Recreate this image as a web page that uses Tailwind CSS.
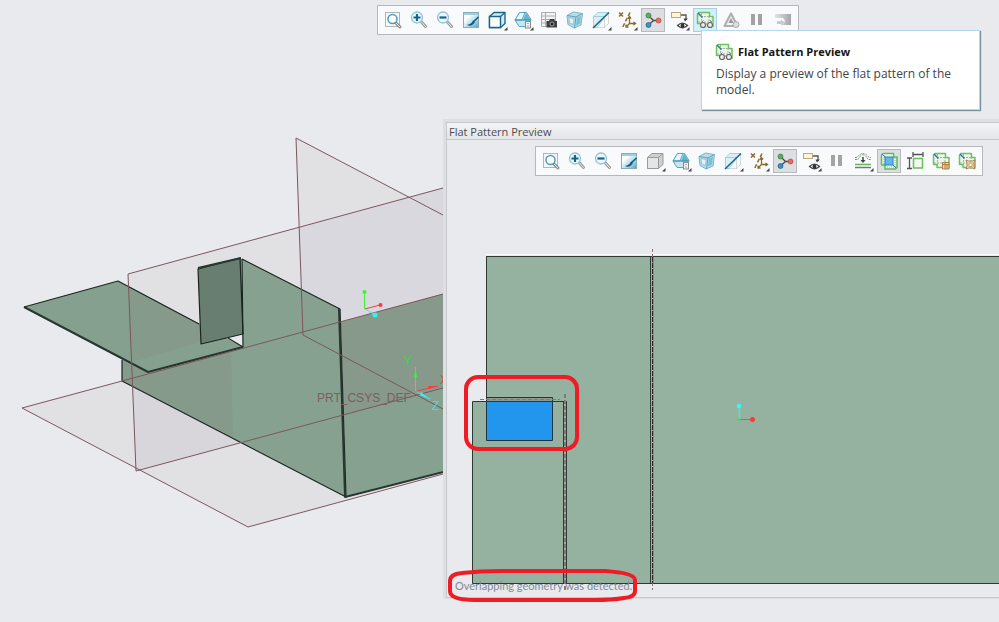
<!DOCTYPE html>
<html lang="en">
<head>
    <meta charset="UTF-8">
    <meta name="viewport" content="width=device-width, initial-scale=1.0">
    <title>Flat Pattern Preview</title>
    <script src="https://cdn.jsdelivr.net/npm/@tailwindcss/browser@4"></script>
</head>
<body class="bg-[#e8eaee] font-['Open_Sans','Noto_Sans',sans-serif] text-xs text-[#444]">

<!-- Icon sprite, every icon fills a 24px tool button -->
<svg class="absolute size-0" aria-hidden="true">
    <defs>
        <linearGradient id="teal" x1="0" y1="0" x2="1" y2="1">
            <stop offset="0.3" stop-color="#fdfefe"/><stop offset="0.75" stop-color="#8fcbe2"/><stop offset="1" stop-color="#4fa3c4"/>
        </linearGradient>
        <linearGradient id="fade" x1="0" y1="0" x2="1" y2="0">
            <stop offset="0" stop-color="#e2e3e4"/><stop offset="1" stop-color="#a3a5a7"/>
        </linearGradient>
    </defs>
    <symbol id="more" viewBox="0 0 24 24"><path d="M22.500 19v3.500h-3.500z" fill="#444"/></symbol>
    <symbol id="refit" viewBox="0 0 24 24">
        <rect x="4.500" y="4.500" width="14" height="14" fill="#f6f6f6" stroke="#b4b4b4"/>
        <path d="M14.500 14.500l4.500 4.500" stroke="#8e8e8e" stroke-width="3" stroke-linecap="round"/>
        <path d="M14.500 14.500l4.500 4.500" stroke="#e4e4e4" stroke-linecap="round"/>
        <circle cx="11.500" cy="11" r="4.500" fill="#fff" stroke="#4b9dbc" stroke-width="1.500"/>
    </symbol>
    <symbol id="zoom-in" viewBox="0 0 24 24">
        <path d="M14.500 14l4 4.500" stroke="#9a9a9a" stroke-width="3" stroke-linecap="round"/>
        <path d="M14.500 14l4 4.500" stroke="#ececec" stroke-linecap="round"/>
        <circle cx="10" cy="9.500" r="5.500" fill="#eef7fb" stroke="#8cc3da" stroke-width="1.300"/>
        <path d="M6.500 9.500h7M10 6v7" stroke="#15658b" stroke-width="2.200"/>
    </symbol>
    <symbol id="zoom-out" viewBox="0 0 24 24">
        <path d="M14.500 14l4 4.500" stroke="#9a9a9a" stroke-width="3" stroke-linecap="round"/>
        <path d="M14.500 14l4 4.500" stroke="#ececec" stroke-linecap="round"/>
        <circle cx="10" cy="9.500" r="5.500" fill="#eef7fb" stroke="#8cc3da" stroke-width="1.300"/>
        <path d="M6.500 9.500h7" stroke="#15658b" stroke-width="2.200"/>
    </symbol>
    <symbol id="repaint" viewBox="0 0 24 24">
        <rect x="4.500" y="4.500" width="15" height="15" fill="url(#teal)" stroke="#8fa9b3"/>
        <path d="M5 5h14v2H5z" fill="#9ed0e3"/>
        <path d="M19.500 9l-6 5.500" stroke="#155b7c" stroke-width="1.600"/>
        <path d="M14.500 12.500c-1.500 2-3 4-6.500 4.500 3 1.500 6 .5 8-3z" fill="#155b7c"/>
    </symbol>
    <symbol id="shading" viewBox="0 0 24 24">
        <path d="M4.500 8.500l4.500-4h11v11l-4.500 4h-11z" fill="#d3edf6" stroke="#1c6788" stroke-width="1.400" stroke-linejoin="round"/>
        <path d="M4.500 8.500h11v11h-11z" fill="#fbfdfe" stroke="#1c6788" stroke-width="1.400"/>
        <path d="M15.500 8.500l4.500-4" stroke="#1c6788" stroke-width="1.400"/>
    </symbol>
    <symbol id="shading-off" viewBox="0 0 24 24">
        <path d="M4.500 8.500l4.500-4h11v11l-4.500 4h-11z" fill="#cfcfcf" stroke="#9a9a9a" stroke-linejoin="round"/>
        <path d="M4.500 8.500h11v11h-11z" fill="#e5e5e5" stroke="#9a9a9a"/>
        <path d="M15.500 8.500l4.500-4" stroke="#9a9a9a"/>
    </symbol>
    <symbol id="views" viewBox="0 0 24 24">
        <path d="M8.500 4.500h7l4.500 7-4 7h-8l-4-6.500z" fill="#c4e7f2" stroke="#5aa6c2" stroke-linejoin="round"/>
        <path d="M8.500 4.500h5.500l-3 7.500H4z" fill="#e9f6fa" stroke="#5aa6c2"/>
        <path d="M15 4.500l5 8h-8z" fill="#5fb5d2"/>
        <path d="M4 12h16" stroke="#3a8bac"/>
        <rect x="14.500" y="13.500" width="5" height="6.500" fill="#f4f4f4" stroke="#8a8a8a"/>
        <path d="M17 15v1M17 17.500v1" stroke="#555"/>
    </symbol>
    <symbol id="view-manager" viewBox="0 0 24 24">
        <path d="M4.500 4.500h14v14h-14zM4.500 8h14M4.500 11.500h14M4.500 15h14M8.500 4.500v14" fill="#f3f3f3" stroke="#acacac"/>
        <path d="M9.500 13h2.500l1-2h4l1 2h2v6.500H9.500z" fill="#3f3f3f"/>
        <circle cx="15" cy="16" r="2" fill="#222" stroke="#bbb" stroke-width=".8"/>
    </symbol>
    <symbol id="perspective" viewBox="0 0 24 24">
        <path d="M4 7.500l6.500-3.500 9 1.500-1.500 11.500-7 3-6-3.500z" fill="#b5dce9" stroke="#7db6cb" stroke-linejoin="round"/>
        <path d="M4 7.500l9 1.500 6.500-3.500M13 9l-1.500 11" fill="none" stroke="#5ba3be"/>
        <path d="M6 9.500l5 1-.5 6-4-1.500z" fill="#e0f1f7" stroke="#84b8cb" stroke-width=".7"/>
        <path d="M14 10l4-2.500-1 8-4 2z" fill="#7cbfd7"/>
    </symbol>
    <symbol id="section" viewBox="0 0 24 24">
        <path d="M4.500 8.500l4.500-4h10.500L8 19.500H4.500z" fill="#d8eff7" stroke="#93c9dd" stroke-width=".8"/>
        <path d="M15.500 8.500v11h-11M19.500 4.500v11l-4 4" fill="none" stroke="#b5b5b5" stroke-dasharray="1 1"/>
        <path d="M4.500 8.500h11l4-4" fill="none" stroke="#a5cddb"/>
        <path d="M4 20L20 4.500" stroke="#1a6488" stroke-width="1.500"/>
    </symbol>
    <symbol id="datum" viewBox="0 0 24 24">
        <g fill="none" stroke="#8c6a2c" stroke-width="1.500">
            <path d="M4 4.500l4 4M8 4.500l-4 4"/>
            <path d="M15 4.500L7.500 19.500" stroke-dasharray="4 2"/>
            <path d="M14.500 9v6.500h5.500M14.500 15.500l-3.500 3.500M13 10.500l1.500-2 1.500 2M18.500 14l2 1.500-2 1.500M11 16.500v2.500h2.500" stroke-width="1.300"/>
        </g>
    </symbol>
    <symbol id="spin" viewBox="0 0 24 24">
        <path d="M7.500 7.500l5 5h5M7.500 17l5-4.500" fill="none" stroke="#4b4b4b" stroke-width="1.300"/>
        <circle cx="7.500" cy="7.500" r="2.500" fill="#5faa5c" stroke="#397b3a" stroke-width=".7"/>
        <circle cx="7.500" cy="17" r="2.500" fill="#3d93b8" stroke="#1d6587" stroke-width=".7"/>
        <circle cx="17.500" cy="12.500" r="2.500" fill="#e46c62" stroke="#b2443c" stroke-width=".7"/>
    </symbol>
    <symbol id="annotation" viewBox="0 0 24 24">
        <rect x="4.500" y="4.500" width="9" height="5" fill="#fdf5d8" stroke="#b7a983"/>
        <path d="M14 7h5v5" fill="none" stroke="#555" stroke-width="1.300"/>
        <path d="M16.500 10.500h4.500l-3 3z" fill="#444"/>
        <path d="M10.500 17.500q5-5 10 0q-5 4.500-10 0z" fill="#fff" stroke="#444" stroke-width="1.200"/>
        <circle cx="15.500" cy="17.500" r="1.900" fill="#333"/>
    </symbol>
    <symbol id="flat" viewBox="0 0 24 24">
        <path d="M6 4.500h10.500v4h3.500v10H8v-3H4.500V6z" fill="#ecf5e9" stroke="#6cc25f" stroke-width="1.500" stroke-linejoin="round"/>
        <path d="M5 14h14.500M8.500 5v13M16 8v10M8 8.500h8" fill="none" stroke="#a3b0a0" stroke-dasharray="2 1"/>
        <path d="M5 5l4.500 4.500" stroke="#277ba4" stroke-width="1.500"/>
    </symbol>
    <symbol id="flat-preview" viewBox="0 0 24 24">
        <use href="#flat" width="24" height="24"/>
        <path d="M8 14.500h12v5H8z" fill="#f5f9f5" fill-opacity=".7"/>
        <circle cx="10" cy="17" r="2.500" fill="#eee" stroke="#666" stroke-width="1.200"/>
        <circle cx="17" cy="17" r="2.500" fill="#eee" stroke="#666" stroke-width="1.200"/>
        <path d="M12.500 16.500q1-1 2 0M8.500 14.500l2-2M18.500 14.500l-1-2.500" fill="none" stroke="#777"/>
    </symbol>
    <symbol id="failures" viewBox="0 0 24 24">
        <path d="M12 5.500l6.500 12.500h-13z" fill="#f2f2f2" stroke="#aeb0b1" stroke-width="2.200" stroke-linejoin="round"/>
        <path d="M12 10l2.500 5h-5z" fill="#999"/>
        <circle cx="17" cy="16.500" r="3" fill="#dedede" stroke="#a9a9a9"/>
    </symbol>
    <symbol id="pause" viewBox="0 0 24 24"><path d="M6 6h4v11H6zM13 6h4v11h-4z" fill="#a3a3a4"/></symbol>
    <symbol id="resume" viewBox="0 0 24 24">
        <path d="M4 6h16v11H11q5-3.500 1-7H4z" fill="url(#fade)"/>
        <path d="M6 13h4v-1.500l4 3-4 3V16H6z" fill="#c9cacb"/>
    </symbol>
    <symbol id="bend" viewBox="0 0 24 24">
        <path d="M4 10.500h3q5-9.500 10 0h3" fill="none" stroke="#66a85e" stroke-dasharray="2 1"/>
        <path d="M4 8.500h2q6-8 12 0h2" fill="none" stroke="#888" stroke-dasharray="2 1"/>
        <path d="M12 8v3.500" stroke="#444" stroke-width="1.500"/><path d="M9.500 11h5L12 14z" fill="#444"/>
        <path d="M4 15.500h16" stroke="#63b757" stroke-width="1.500"/>
        <path d="M4 18.500h16" stroke="#777" stroke-width="1.500"/>
    </symbol>
    <symbol id="overlap" viewBox="0 0 24 24">
        <path d="M6 4.500h10.500v3.500h3.500v10.500l-1.500 1.500H8v-4H4.500V6z" fill="#eef6ec" stroke="#62bb56" stroke-width="1.500" stroke-linejoin="round"/>
        <path d="M7 4v11M4 15h4M16 8h4M18 9v11M8 18h12" fill="none" stroke="#8bbb85" stroke-dasharray="1 1"/>
        <rect x="8" y="8" width="8" height="8" fill="#63b5ea" stroke="#2484bd"/>
        <path d="M5 5l4 4M19 19l-3-3" stroke="#2b7ca6"/>
    </symbol>
    <symbol id="dimension" viewBox="0 0 24 24">
        <path d="M4 9h5M4 19.500h5M6.500 9v10.500M10 3v5M20 3v5M10 5.500h10" fill="none" stroke="#555" stroke-width="1.300"/>
        <rect x="10.500" y="9.500" width="9" height="9.500" fill="#f3f8f1" stroke="#6cbd60" stroke-width="1.500"/>
    </symbol>
    <symbol id="flat-table" viewBox="0 0 24 24">
        <use href="#flat" width="24" height="24"/>
        <path d="M13.500 13.500h6.500v6.500h-6.500zM13.500 15.500h6.500M16 13.500v6.500M18 15v5" fill="#f2d8a8" stroke="#ac8145"/>
    </symbol>
    <symbol id="flat-form" viewBox="0 0 24 24">
        <use href="#flat" width="24" height="24"/>
        <path d="M11 11l2.500 1h4L20 11l-1 3v3l1 3-2.500-1h-4L11 20l1-3v-3z" fill="#f4d9ac" stroke="#ad8450"/>
        <path d="M14 14h3v3.500h-3z" fill="#fff" stroke="#c3a272"/>
    </symbol>
</svg>

<main class="relative min-h-screen overflow-hidden">

    <!-- 3D model -->
    <svg class="absolute inset-0 size-full" fill="none" stroke-linejoin="round">
        <!-- datum planes -->
        <g fill="#e1e0e2">
            <path d="M22 408L443 294V474L248 527z"/>
            <path d="M128 274L443 188V388L136 471z"/>
            <path d="M296 138L443 215V409L303 335z"/>
        </g>
        <path d="M299 228L443 188V388L303 335z" fill="#d9d8de"/>
        <path d="M132 386L136 471L243 442z" fill="#d8d6da"/>
        <!-- walls -->
        <path d="M341 322L443 294V471L346 496z" fill="#87a190"/>
        <path d="M341 322L443 294V388L344 415z" fill="#86998a"/>
        <path d="M242 259L340 309L346 497L122 381V360L148 373L243 347z" fill="#87a190"/>
        <path d="M122 360L148 373L231 350L233 438L122 381z" fill="#869a8b"/>
        <path d="M24 307L118 281L243 347L148 372z" fill="#86a08f"/>
        <path d="M128 286L222 336L132 362L130 361z" fill="#869a8b"/>
        <path d="M228 338L242 334V346z" fill="#e9e9ec"/>
        <path d="M198 269L241 258L243 334L201 344z" fill="#687e70"/>
        <g stroke="#19261f" stroke-width="1.200">
            <path d="M24 307L118 281L199 324M228 338L243 347"/>
            <path d="M122 360V381L346 497L340 309L242 259"/>
            <path d="M198 269L201 344L243 334L240 258z"/>
            <path d="M242 259L243 347"/>
        </g>
        <g stroke="#27362e" stroke-width="2">
            <path d="M24 307L148 372L243 347"/>
            <path d="M339 309L345 497L443 472"/>
            <path d="M198 268L241 258"/>
        </g>
        <g stroke="#7b575e" stroke-width="1">
            <path d="M443 188L128 274L136 471L443 388"/>
            <path d="M443 215L296 138L303 335L443 409"/>
            <path d="M148 374L22 408L248 527L443 474"/>
            <path d="M148 374L443 294"/>
        </g>
        <!-- spin center -->
        <path d="M364.500 309V292" stroke="#3ff03f"/><path d="M365 309L380 305" stroke="#fb3b3b"/><path d="M365 309L375 315" stroke="#2ff6fb"/>
        <circle cx="364.500" cy="292" r="2" fill="#3ff03f"/><circle cx="380.500" cy="305" r="2" fill="#fb3b3b"/><circle cx="375" cy="315" r="2.500" fill="#2ff6fb"/>
        <!-- coordinate system -->
        <path d="M415.500 391V367" stroke="#3ff03f"/><path d="M414 377h3l-1.500-8z" fill="#3ff03f"/>
        <path d="M417 391L438 386" stroke="#fb3b3b"/><path d="M428 386l9 0-8 3z" fill="#fb3b3b"/>
        <path d="M417 392L430 399" stroke="#2ff6fb"/><path d="M421 392l7 6-8-3z" fill="#2ff6fb"/>
        <g class="font-['Liberation_Sans',sans-serif] text-xs">
            <text x="317" y="402" fill="#7b5f61">PRT_CSYS_DEF</text>
            <text x="404" y="365" fill="#3fd63f">Y</text>
            <text x="440" y="384" fill="#fb3b3b">X</text>
            <text x="432" y="410" fill="#3be0e6">Z</text>
        </g>
    </svg>

    <!-- Graphics toolbar -->
    <div role="toolbar" aria-label="Graphics" class="absolute left-[377px] top-[5px] flex gap-0.5 border border-[#b5b7ba] bg-[#f9fafc] px-[3px] py-0.5">
        <button class="size-6" aria-label="Refit"><svg class="size-6"><use href="#refit"/></svg></button>
        <button class="size-6" aria-label="Zoom In"><svg class="size-6"><use href="#zoom-in"/></svg></button>
        <button class="size-6" aria-label="Zoom Out"><svg class="size-6"><use href="#zoom-out"/></svg></button>
        <button class="size-6" aria-label="Repaint"><svg class="size-6"><use href="#repaint"/></svg></button>
        <button class="size-6" aria-label="Display Style"><svg class="size-6"><use href="#shading"/><use href="#more"/></svg></button>
        <button class="size-6" aria-label="Saved Orientations"><svg class="size-6"><use href="#views"/><use href="#more"/></svg></button>
        <button class="size-6" aria-label="View Manager"><svg class="size-6"><use href="#view-manager"/></svg></button>
        <button class="size-6" aria-label="Perspective View"><svg class="size-6"><use href="#perspective"/></svg></button>
        <button class="size-6" aria-label="Section"><svg class="size-6"><use href="#section"/><use href="#more"/></svg></button>
        <button class="size-6" aria-label="Datum Display Filters"><svg class="size-6"><use href="#datum"/><use href="#more"/></svg></button>
        <button class="size-6 bg-[#dcdee1] outline -outline-offset-1 outline-[#b8babd]" aria-label="Spin Center" aria-pressed="true"><svg class="size-6"><use href="#spin"/></svg></button>
        <button class="size-6" aria-label="Annotation Display"><svg class="size-6"><use href="#annotation"/><use href="#more"/></svg></button>
        <button class="size-6 bg-[#d0f0fb] outline -outline-offset-1 outline-[#a9cfdf]" aria-label="Flat Pattern Preview" aria-pressed="true"><svg class="size-6"><use href="#flat-preview"/></svg></button>
        <button class="size-6" aria-label="Failures" disabled><svg class="size-6"><use href="#failures"/></svg></button>
        <button class="size-6" aria-label="Pause" disabled><svg class="size-6"><use href="#pause"/></svg></button>
        <button class="size-6" aria-label="Resume" disabled><svg class="size-6"><use href="#resume"/></svg></button>
    </div>

    <!-- Flat pattern window -->
    <section class="absolute left-[443px] right-0 top-[119px] flex h-[480px] flex-col border-b border-l-3 border-t-3 border-[#dedfe2] bg-[#e8eaee]">
        <h2 class="h-[18px] border-l border-t border-b border-[#c6c8cb] bg-linear-to-b from-[#f3f4f6] to-[#e4e5e8] pl-0.5 text-[11px] leading-[18px] text-[#4c4c4c]">Flat Pattern Preview</h2>
        <div class="relative flex-1 border-b border-l border-[#c6c8cb]">
            <svg class="absolute inset-0 size-full overflow-visible" fill="none">
                <g transform="translate(-447 -140)">
                    <path d="M486 254.500H4000" stroke="#fafbfb"/>
                    <rect x="486.500" y="256.500" width="4000" height="327" fill="#95b1a0" stroke="#2c3a33"/>
                    <path d="M472.500 401.500H566.500V583.500H472.500z" fill="#95b1a0" stroke="#2c3a33"/>
                    <path d="M486.500 397.500H552.500V440.500H486.500z" fill="#2196ec" stroke="#1f3342"/>
                    <path d="M487 398h65v3h-65z" fill="#93998d"/>
                    <path d="M486 401.500h67" stroke="#2c3a33"/>
                    <path d="M480 399.500h80" stroke="#8d7377" stroke-dasharray="4 2"/>
                    <path d="M563.500 401V583M650.500 257V583" stroke="#2c3a33"/>
                    <path d="M653.500 257V583" stroke="#7b9184"/>
                    <path d="M565 394V590" stroke="#8d7377" stroke-width="2" stroke-dasharray="4 2"/>
                    <path d="M652.500 249V257M652.500 583V590" stroke="#8d7377" stroke-dasharray="3 2"/>
                    <path d="M652.500 257V583" stroke="#3a2126" stroke-dasharray="5 1"/>
                    <path d="M739.500 419V406" stroke="#55e0dd" stroke-width="1.500"/>
                    <path d="M739 419.500H752" stroke="#e4544c"/>
                    <circle cx="739" cy="406" r="2.300" fill="#35f9fb"/>
                    <circle cx="752.500" cy="419.500" r="2.500" fill="#f73c36"/>
                    <circle cx="739" cy="419.500" r="1.200" fill="#35e835"/>
                </g>
            </svg>

            <div role="toolbar" aria-label="Flat pattern graphics" class="relative ml-[88px] mt-[6px] flex w-fit gap-0.5 border border-[#b5b7ba] bg-[#f9fafc] px-[3px] py-0.5">
                <button class="size-6" aria-label="Refit"><svg class="size-6"><use href="#refit"/></svg></button>
                <button class="size-6" aria-label="Zoom In"><svg class="size-6"><use href="#zoom-in"/></svg></button>
                <button class="size-6" aria-label="Zoom Out"><svg class="size-6"><use href="#zoom-out"/></svg></button>
                <button class="size-6" aria-label="Repaint"><svg class="size-6"><use href="#repaint"/></svg></button>
                <button class="size-6" aria-label="Display Style"><svg class="size-6"><use href="#shading-off"/><use href="#more"/></svg></button>
                <button class="size-6" aria-label="Saved Orientations"><svg class="size-6"><use href="#views"/><use href="#more"/></svg></button>
                <button class="size-6" aria-label="Perspective View"><svg class="size-6"><use href="#perspective"/></svg></button>
                <button class="size-6" aria-label="Section"><svg class="size-6"><use href="#section"/><use href="#more"/></svg></button>
                <button class="size-6" aria-label="Datum Display Filters"><svg class="size-6"><use href="#datum"/><use href="#more"/></svg></button>
                <button class="size-6 bg-[#dcdee1] outline -outline-offset-1 outline-[#b8babd]" aria-label="Spin Center" aria-pressed="true"><svg class="size-6"><use href="#spin"/></svg></button>
                <button class="size-6" aria-label="Annotation Display"><svg class="size-6"><use href="#annotation"/><use href="#more"/></svg></button>
                <button class="size-6" aria-label="Pause" disabled><svg class="size-6"><use href="#pause"/></svg></button>
                <button class="size-6" aria-label="Bend Display"><svg class="size-6"><use href="#bend"/><use href="#more"/></svg></button>
                <button class="size-6 bg-[#dcdee1] outline -outline-offset-1 outline-[#b8babd]" aria-label="Detect Overlap" aria-pressed="true"><svg class="size-6"><use href="#overlap"/></svg></button>
                <button class="size-6" aria-label="Bounding Box"><svg class="size-6"><use href="#dimension"/></svg></button>
                <button class="size-6" aria-label="Flat Pattern Instance"><svg class="size-6"><use href="#flat-table"/></svg></button>
                <button class="size-6" aria-label="Flat Pattern Feature"><svg class="size-6"><use href="#flat-form"/></svg></button>
            </div>

            <p role="status" class="absolute bottom-[3px] left-2 whitespace-nowrap font-['Lato',sans-serif] text-[11px] leading-4 text-[#818b96]">Overlapping geometry was detected.</p>

            <!-- red markups -->
            <svg class="pointer-events-none absolute inset-0 size-full overflow-visible" fill="none" stroke="#ee1c24" stroke-width="4">
                <g transform="translate(-447 -140)">
                    <rect x="466" y="377" width="111" height="72" rx="12"/>
                    <path d="M450 581Q450 574 462 573Q480 571 500 571H605Q635 573 635 580V591Q635 597 624 598Q612 600 595 600H475Q450 600 450 591z"/>
                </g>
            </svg>
        </div>
    </section>

    <!-- Tooltip -->
    <div role="tooltip" class="absolute left-[701px] top-[30px] w-[279px] border border-[#b3d9e8] bg-white px-3.5 py-[11px] shadow-[1px_1px_1px_#78939d]">
        <h3 class="flex items-center gap-0.5 text-[11px] font-bold leading-5 text-[#151515]"><svg class="-my-1 -ml-1 size-6"><use href="#flat-preview"/></svg>Flat Pattern Preview</h3>
        <p class="mt-1 leading-4">Display a preview of the flat pattern of the model.</p>
    </div>
</main>
</body>
</html>
